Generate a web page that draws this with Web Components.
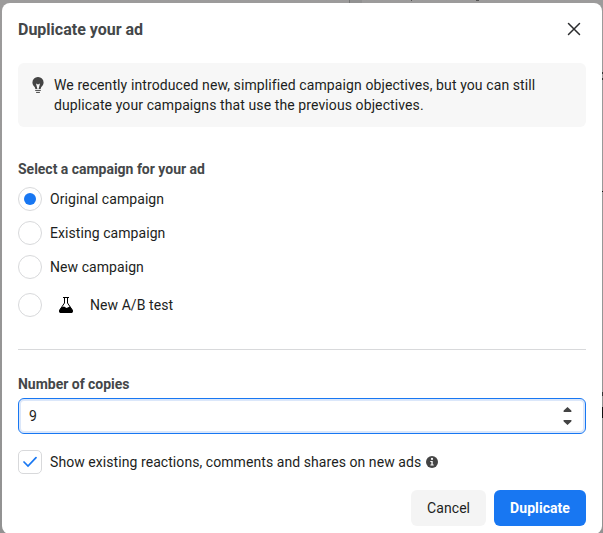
<!DOCTYPE html>
<html lang="en">
<head>
<meta charset="utf-8">
<title>Duplicate your ad</title>
<style>
html,body{margin:0;height:533px;overflow:hidden}
body{font:400 14px/20px Roboto,sans-serif;color:#1c1e21;letter-spacing:.066px}
</style>
</head>
<body>
<ad-backdrop>
  <ad-dialog heading="Duplicate your ad">
    <ad-notice>We recently introduced new, simplified campaign objectives, but you can still duplicate your campaigns that use the previous objectives.</ad-notice>
    <ad-section heading="Select a campaign for your ad" class="first">
      <ad-radio checked>Original campaign</ad-radio>
      <ad-radio>Existing campaign</ad-radio>
      <ad-radio>New campaign</ad-radio>
      <ad-radio flask>New A/B test</ad-radio>
    </ad-section>
    <ad-rule></ad-rule>
    <ad-section heading="Number of copies">
      <ad-stepper value="9"></ad-stepper>
    </ad-section>
    <ad-check>Show existing reactions, comments and shares on new ads</ad-check>
    <ad-button slot="footer">Cancel</ad-button>
    <ad-button slot="footer" primary>Duplicate</ad-button>
  </ad-dialog>
</ad-backdrop>
<script>
function define(name, render) {
  customElements.define(name, class extends HTMLElement {
    constructor() {
      super();
      this.attachShadow({ mode: 'open' });
    }
    connectedCallback() {
      this.shadowRoot.innerHTML = render(this);
    }
  });
}

define('ad-backdrop', () => `
<style>
:host{display:block;position:relative;box-sizing:border-box;height:533px;padding:3px 1px 0 2px;background:linear-gradient(#9c9b9b,#929292);overflow:hidden}
i{position:absolute;background:#333}
</style>
<i style="left:349px;top:0;width:1px;height:3px;background:#777"></i>
<i style="left:350px;top:0;width:12px;height:3px;background:#929292"></i>
<i style="left:411px;top:0;width:1px;height:1px;background:#555"></i>
<i style="left:476px;top:0;width:3px;height:1px;background:#555"></i>
<i style="left:602px;top:72px;width:1px;height:2px"></i>
<i style="left:602px;top:78px;width:1px;height:2px"></i>
<i style="left:602px;top:191px;width:1px;height:1px;background:#111"></i>
<i style="left:602px;top:392px;width:1px;height:4px"></i>
<i style="left:602px;top:407px;width:1px;height:11px;background:#111"></i>
<slot></slot>`);

define('ad-dialog', el => `
<style>
:host{display:flex;flex-direction:column;position:relative;box-sizing:border-box;height:531px;padding:0 16px 8px;background:#fff;border-radius:8px}
header{display:flex;align-items:center;justify-content:space-between;height:52px;margin-bottom:8px}
h1{margin:0;padding-top:2px;font:700 16px/20px Roboto,sans-serif;color:#444749;letter-spacing:0}
header svg{margin-right:5px}
footer{display:flex;justify-content:flex-end;gap:8px;margin-top:auto}
</style>
<header><h1>${el.getAttribute('heading')}</h1>
<svg width="14" height="14" viewBox="0 0 14 14" stroke="#2b2c2e" stroke-width="1.5" stroke-linecap="round"><path d="M1.5 1.5l11 11M12.500 1.500l-11 11"/></svg></header>
<slot></slot>
<footer><slot name="footer"></slot></footer>`);

define('ad-notice', () => `
<style>
:host{display:flex;gap:9px;box-sizing:border-box;height:64px;padding:12px 40px 12px 14px;background:#f7f7f7;border-radius:6px;letter-spacing:.1px}
svg{flex:none;margin-top:2px}
</style>
<svg width="13" height="16" viewBox="0 0 13 16"><path fill="#444" d="M6 0A5.500 5.500 0 0 0 .4 5.400C.4 7.800 1.800 8.800 2.700 10L3.400 12H5.400L4 6.400 6 7.400 8 6.400 6.600 12H8.600L9.300 10C10.200 8.800 11.600 7.800 11.600 5.400A5.500 5.500 0 0 0 6 0Z"/><path d="M3.200 13.400H8.800M4.100 15.400H7.900" stroke="#444" stroke-width="1"/></svg>
<span><slot></slot></span>`);

define('ad-section', el => `
<style>
:host{display:block}
:host(.first){margin-top:32px}
h2{margin:0;font:700 14px/20px Roboto,sans-serif;color:#444749;letter-spacing:-.02px}
</style>
<h2>${el.getAttribute('heading')}</h2><slot></slot>`);

define('ad-radio', el => `
<style>
:host{display:flex;align-items:center;gap:8px;height:24px;margin-top:10px}
:host([checked]){margin-top:8px}
:host([flask]){margin-top:14px}
b{box-sizing:border-box;width:24px;height:24px;border:1px solid #d8d9db;border-radius:50%;display:grid;place-items:center}
b i{width:12px;height:12px;border-radius:50%;background:#1877f2}
svg{margin:0 8px}
</style>
<b>${el.hasAttribute('checked') ? '<i></i>' : ''}</b>
${el.hasAttribute('flask') ? `<svg width="16" height="16" viewBox="0 0 16 16"><path d="M5 .5H11M6.500 .5V6L1.700 13Q1 15.500 2.500 15.500H13.500Q15 15.500 14.300 13L9.500 6V.5" fill="none" stroke="#000"/><path d="M3.200 10.500L6 9.500 8.500 11 12 9.500 14.700 13.500Q15 16 13.500 16H2.500Q1 16 1.300 13.500Z"/></svg>` : ''}
<span><slot></slot></span>`);

define('ad-rule', () => `<style>:host{display:block;height:1px;margin:32px 0 24px;background:#d8d9db}</style>`);

define('ad-stepper', el => `
<style>
:host{display:flex;align-items:center;justify-content:space-between;box-sizing:border-box;height:36px;margin-top:4px;padding:0 13px 0 10px;border:1px solid #1877f2;border-radius:6px;box-shadow:inset 0 0 0 2px #dbe7fa}
</style>
<span>${el.getAttribute('value')}</span>
<svg width="9" height="18" viewBox="0 0 9 18" fill="#444"><path d="M4.500 0L8.300 3.600Q9 5 8 5H1Q0 5 .7 3.600ZM4.500 18L.7 14.400Q0 13 1 13H8Q9 13 8.300 14.400Z"/></svg>`);

define('ad-check', () => `
<style>
:host{display:flex;align-items:center;height:24px;margin-top:16px}
b{box-sizing:border-box;width:24px;height:24px;margin-right:8px;border:1px solid #d8d9db;border-radius:5px;display:grid;place-items:center}
.info{margin-left:5px}
</style>
<b><svg width="14" height="12" viewBox="0 0 14 12"><path d="M1 6L5 10 13 1.700" fill="none" stroke="#1877f2" stroke-width="1.700" stroke-linecap="round"/></svg></b>
<span><slot></slot></span>
<svg class="info" width="12" height="12" viewBox="0 0 12 12"><circle cx="6" cy="6" r="6" fill="#444"/><circle cx="6" cy="2.900" r="1.100" fill="#fff"/><path d="M4.300 5.100H6.700V8.500H7.700V9.500H4.400V8.500H5.400V6.100H4.300Z" fill="#fff"/></svg>`);

define('ad-button', () => `
<style>
:host{display:flex;align-items:center;height:36px;padding:0 16px;background:#f4f4f4;border-radius:6px}
:host([primary]){background:#1877f2;color:#fff;font-weight:700}
</style><slot></slot>`);
</script>
</body>
</html>
